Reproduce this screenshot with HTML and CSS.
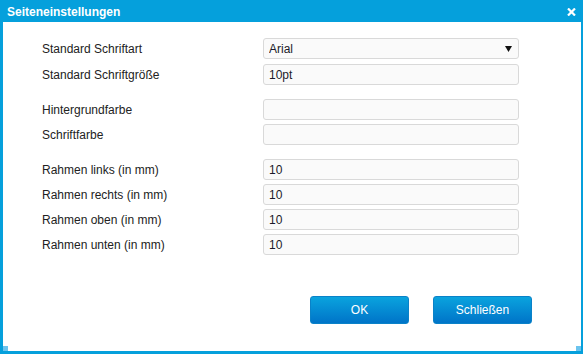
FILE: index.html
```html
<!DOCTYPE html>
<html lang="de">
<head>
    <meta charset="UTF-8">
    <meta name="viewport" content="width=device-width, initial-scale=1.0">
    <title>Seiteneinstellungen</title>
    <link rel="stylesheet" href="styles.css">
</head>
<body>
    <div class="dialog">
        <div class="titlebar">
            <span class="title">Seiteneinstellungen</span>
            <button class="close" type="button" aria-label="Schließen">
                <svg width="9" height="8" viewBox="0 0 9 8">
                    <path d="M1 0.5 L8 7.5 M8 0.5 L1 7.5" stroke="#fff" stroke-width="2.2" fill="none"/>
                </svg>
            </button>
        </div>
        <form class="content">
            <div class="group">
                <label for="schriftart">Standard Schriftart</label>
                <div class="select-wrap">
                    <select id="schriftart">
                        <option>Arial</option>
                        <option>Times New Roman</option>
                        <option>Courier New</option>
                    </select>
                    <svg class="arrow" width="7" height="6" viewBox="0 0 7 6"><path d="M0 0 H7 L3.5 6 Z" fill="#111"/></svg>
                </div>
                <label for="groesse">Standard Schriftgröße</label>
                <input type="text" id="groesse" value="10pt">
            </div>
            <div class="group">
                <label for="hintergrund">Hintergrundfarbe</label>
                <input type="text" id="hintergrund">
                <label for="farbe">Schriftfarbe</label>
                <input type="text" id="farbe">
            </div>
            <div class="group">
                <label for="links">Rahmen links (in mm)</label>
                <input type="text" id="links" value="10">
                <label for="rechts">Rahmen rechts (in mm)</label>
                <input type="text" id="rechts" value="10">
                <label for="oben">Rahmen oben (in mm)</label>
                <input type="text" id="oben" value="10">
                <label for="unten">Rahmen unten (in mm)</label>
                <input type="text" id="unten" value="10">
            </div>
            <div class="buttons">
                <button type="button" class="btn">OK</button>
                <button type="button" class="btn">Schließen</button>
            </div>
        </form>
        <span class="grip grip-left"></span>
        <span class="grip grip-right"></span>
    </div>
</body>
</html>
```

FILE: styles.css
```css
body {
    margin: 0;
    padding: 0;
    font-family: "Liberation Sans", Arial, sans-serif;
    font-size: 12px;
    color: #222;
    background: #fff;
}
.dialog {
    position: relative;
    width: 583px;
    height: 354px;
    box-sizing: border-box;
    border: 3px solid #05a0dc;
    border-top: none;
    border-right-width: 2px;
    background: #fff;
}
.titlebar {
    height: 22px;
    margin: 0 -2px 0 -3px;
    padding: 0 7px;
    background: #05a0dc;
    display: flex;
    align-items: center;
    justify-content: space-between;
}
.title {
    color: #fff;
    font-weight: bold;
    font-size: 12px;
    padding-top: 1px;
}
.close {
    border: none;
    background: none;
    padding: 0;
    display: flex;
    margin-top: 2px;
}
.content {
    padding: 16px 0 0 39px;
}
.group {
    display: grid;
    grid-template-columns: 221px 256px;
    row-gap: 4px;
    align-items: center;
    margin-bottom: 14px;
}
.group label {
    color: #222;
}
input, select {
    font-family: "Liberation Sans", Arial, sans-serif;
    font-size: 12px;
    color: #1a1a2a;
    height: 21px;
    box-sizing: border-box;
    border: 1px solid #d9d9d9;
    border-radius: 3px;
    background: #fafafa;
    padding: 0 5px;
    margin: 0;
    width: 256px;
}
.select-wrap {
    position: relative;
    margin-bottom: 1px;
}
select {
    appearance: none;
    -webkit-appearance: none;
    display: block;
}
.arrow {
    position: absolute;
    right: 7px;
    top: 8px;
}
.buttons {
    display: flex;
    gap: 24px;
    padding-left: 268px;
    margin-top: 41px;
}
.btn {
    width: 99px;
    height: 28px;
    border: 1px solid #0a82c8;
    border-radius: 3px;
    background: linear-gradient(#0aa3de, #0074c8);
    color: #fff;
    font-family: "Liberation Sans", Arial, sans-serif;
    font-size: 12px;
    cursor: pointer;
}
.grip {
    position: absolute;
    bottom: 0;
    width: 5px;
    height: 5px;
    background: #6cc4ee;
}
.grip-left {
    left: 0;
}
.grip-right {
    right: 0;
}
```
